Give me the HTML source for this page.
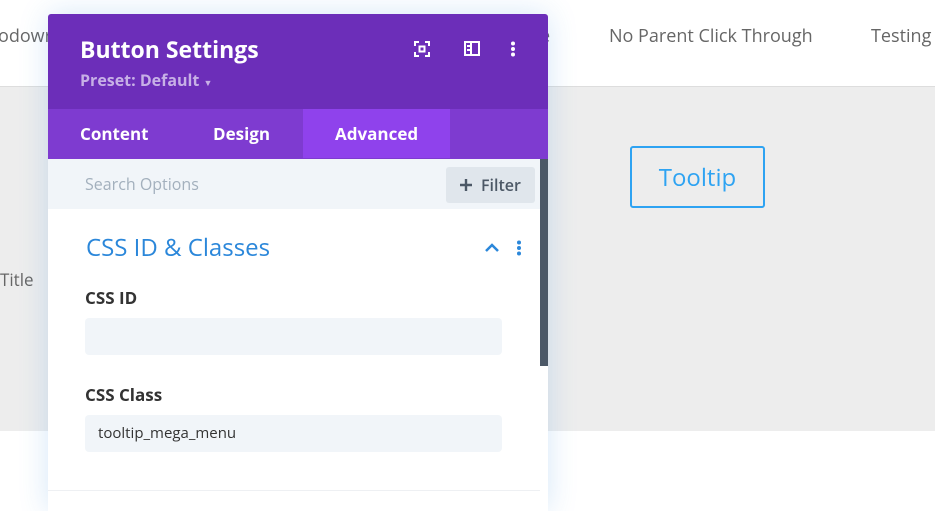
<!DOCTYPE html>
<html><head><style>
*{margin:0;padding:0;box-sizing:border-box}
body{width:935px;height:511px;overflow:hidden;background:#fff;font-family:"Open Sans","Liberation Sans",sans-serif;position:relative}
.top{position:absolute;left:0;top:0;width:935px;height:87px;background:#fff;border-bottom:1px solid #ddd}
.top span{position:absolute;top:24px;font-size:18px;color:#666}
.gray{position:absolute;left:0;top:87px;width:935px;height:344px;background:#ededed}
.tt{position:absolute;left:630px;top:146px;width:135px;height:62px;border:2px solid #2ea3f2;border-radius:3px;color:#2ea3f2;font-size:24px;text-align:center;line-height:60px}
.panel{position:absolute;left:48px;top:14px;width:500px;height:497px;background:#fff;border-radius:3px 3px 0 0;box-shadow:0 0 30px rgba(43,135,218,.2);overflow:hidden}
.hd{height:95px;background:#6c2eb9;color:#fff;position:relative}
.hd h1{position:absolute;left:32px;top:19px;font-size:23px;font-weight:700}
.hd .p{position:absolute;left:32px;top:55px;font-size:16px;font-weight:700;color:#c7b0e6}
.tabs{height:50px;background:#7e3bd0;position:relative;color:#fff;font-size:17px;font-weight:700}
.tabs div{position:absolute;top:0;line-height:49px}
.srch{height:50px;background:#f1f5f9;position:relative}
.srch>span{position:absolute;left:37px;top:14px;color:#a3b0bd;font-size:16px}
.flt{position:absolute;left:398px;top:8px;width:89px;height:36px;background:#e0e6ec;border-radius:3px;color:#4c5866;font-size:16px;line-height:36px;font-weight:600}
.flt svg{position:absolute;left:14px;top:12px}
.flt b{position:absolute;left:35px;top:0;font-weight:600}
.sb{position:absolute;left:492px;top:145px;width:8px;height:207px;background:#4b5867}
.sec{position:absolute;left:38px;top:217px;font-size:24px;color:#2b87da}
.lbl{position:absolute;left:37px;font-size:17px;font-weight:700;color:#333}
.in{position:absolute;left:37px;width:417px;height:37px;background:#f1f5f9;border-radius:4px;font-size:15px;color:#333;padding-left:13px;line-height:37px}
</style></head><body>
<div class="top"><span style="left:-2px">odowr</span><span style="left:609px">No Parent Click Through</span><span style="left:871px">Testing</span><span style="left:540px">e</span></div>
<div class="gray"></div>
<div style="position:absolute;left:0;top:268px;font-size:17px;color:#666">Title</div>
<div class="tt">Tooltip</div>
<div class="panel">
<div class="hd"><h1>Button Settings</h1><div class="p">Preset: Default <span style="font-size:9px">▼</span></div>
<svg style="position:absolute;left:366px;top:27px" width="16" height="16" viewBox="0 0 16 16" fill="none" stroke="#fff" stroke-width="2"><path d="M1 5V1h4M11 1h4v4M15 11v4h-4M5 15H1v-4"/><rect x="5.5" y="5.5" width="5" height="5"/></svg>
<svg style="position:absolute;left:416px;top:27px" width="16" height="15" viewBox="0 0 16 15" fill="none" stroke="#fff" stroke-width="2"><rect x="1" y="1" width="14" height="13"/><path d="M7 1v13M3 5h3M3 9h3"/></svg>
<svg style="position:absolute;left:462px;top:27px" width="6" height="16"><circle cx="3" cy="2.5" r="2" fill="#fff"/><circle cx="3" cy="8" r="2" fill="#fff"/><circle cx="3" cy="13.5" r="2" fill="#fff"/></svg>
</div>
<div class="tabs"><div style="left:32px">Content</div><div style="left:165px">Design</div><div style="left:255px;width:147px;background:#8f42ec;padding-left:32px">Advanced</div></div>
<div class="srch"><span>Search Options</span><div class="flt"><svg width="12" height="12"><path d="M6 0v12M0 6h12" stroke="#4c5866" stroke-width="2.4"/></svg><b>Filter</b></div></div>
<div class="sb"></div>
<div class="sec">CSS ID &amp; Classes</div>
<svg style="position:absolute;left:437px;top:229px" width="14" height="9" fill="none" stroke="#2b87da" stroke-width="2.5"><path d="M1 8l6-6 6 6"/></svg>
<svg style="position:absolute;left:468px;top:226px" width="6" height="16"><circle cx="3" cy="2.5" r="2" fill="#2b87da"/><circle cx="3" cy="8" r="2" fill="#2b87da"/><circle cx="3" cy="13.5" r="2" fill="#2b87da"/></svg>
<div class="lbl" style="top:272px">CSS ID</div>
<div class="in" style="top:304px"></div>
<div class="lbl" style="top:369px">CSS Class</div>
<div class="in" style="top:401px">tooltip_mega_menu</div>
<div style="position:absolute;left:0;top:476px;width:492px;height:1px;background:#eef0f3"></div>
</div>
</body></html>
